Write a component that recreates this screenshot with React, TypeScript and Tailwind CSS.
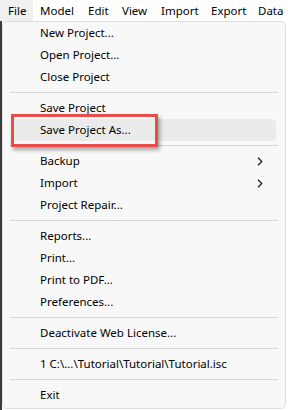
import React from "react";

type Entry = { label: string; sub?: boolean; active?: boolean } | "sep";

// width of each menubar slot, matching the native spacing
const menuBar: { label: string; w: string }[] = [
  { label: "File", w: "w-[33px] pl-[8px] bg-[#f0f0f0]" },
  { label: "Model", w: "w-[48px] pl-[7px]" },
  { label: "Edit", w: "w-[34px] pl-[7px]" },
  { label: "View", w: "w-[39px] pl-[7px]" },
  { label: "Import", w: "w-[50px] pl-[7px]" },
  { label: "Export", w: "w-[47px] pl-[7px]" },
  { label: "Data", w: "w-[37px] pl-[7px]" },
];

const entries: Entry[] = [
  { label: "New Project..." },
  { label: "Open Project..." },
  { label: "Close Project" },
  "sep",
  { label: "Save Project" },
  { label: "Save Project As...", active: true },
  "sep",
  { label: "Backup", sub: true },
  { label: "Import", sub: true },
  { label: "Project Repair..." },
  "sep",
  { label: "Reports..." },
  { label: "Print..." },
  { label: "Print to PDF..." },
  { label: "Preferences..." },
  "sep",
  { label: "Deactivate Web License..." },
  "sep",
  { label: "1 C:\\...\\Tutorial\\Tutorial\\Tutorial.isc" },
  "sep",
  { label: "Exit" },
];

function Chevron() {
  return (
    <svg width="6" height="9" viewBox="0 0 6 9" className="absolute right-[13px] top-[7px]">
      <path d="M1 0.8 L4.8 4.5 L1 8.2" fill="none" stroke="#1a1a1a" strokeWidth="1.2" />
    </svg>
  );
}

export default function App() {
  return (
    <div className="relative w-[288px] h-[410px] overflow-hidden bg-white text-[11.5px] text-black font-['Noto_Sans',sans-serif]">
      {/* Menu bar */}
      <div className="flex h-[21px] items-center bg-white">
        {menuBar.map((m) => (
          <div key={m.label} className={`h-full shrink-0 flex items-center whitespace-nowrap ${m.w}`}>
            {m.label}
          </div>
        ))}
      </div>

      {/* Dropdown */}
      <div className="flex h-[389px]">
        <div className="w-[2px] bg-[#3b3b3b]" />
        <div className="w-[284px] h-[388px] border border-[#dedede] rounded-[5px] bg-[#f8f8f8]">
          {entries.map((e, i) =>
            e === "sep" ? (
              <div key={i} className="h-[9px] flex items-center px-[7px]">
                <div className="h-px w-full bg-[#d6d6d6]" />
              </div>
            ) : (
              <div
                key={i}
                className={`relative h-[22px] mx-[9px] pl-[28px] flex items-center rounded-[4px] whitespace-nowrap ${
                  e.active ? "bg-[#ebebeb]" : ""
                }`}
              >
                {e.label}
                {e.sub && <Chevron />}
              </div>
            )
          )}
        </div>
      </div>

      {/* Highlight annotation */}
      <div className="absolute left-[11px] top-[114px] w-[147px] h-[33px] border-[3px] border-[#ea4b4b] shadow-[2px_3px_4px_rgba(0,0,0,0.35)]" />
    </div>
  );
}
